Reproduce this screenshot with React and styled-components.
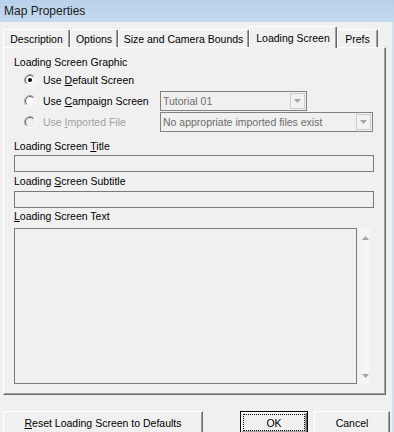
import React from 'react';
import styled, { createGlobalStyle } from 'styled-components';

const GlobalStyle = createGlobalStyle`
    html, body { margin: 0; padding: 0; background: #f0f0f0; }
`;

const Window = styled.div`
    width: 394px;
    height: 432px;
    overflow: hidden;
    display: flex;
    flex-direction: column;
    background: #f0f0f0;
    font-family: "Liberation Sans", Arial, sans-serif;
    font-size: 10.5px;
    color: #000;
`;

const TitleBar = styled.div`
    height: 22px;
    flex-shrink: 0;
    display: flex;
    align-items: center;
    padding-left: 4px;
    font-size: 12px;
    color: #1b1b1b;
    background: linear-gradient(#b8d0ea, #c5d9ee);
`;

const Client = styled.div`
    flex: 1;
    display: flex;
    flex-direction: column;
    padding: 4px 0 0 3px;
    border-right: 2px solid #d2e1f1;
`;

const TabStrip = styled.div`
    display: flex;
    align-items: flex-end;
    height: 21px;
`;

const Tab = styled.div`
    box-sizing: border-box;
    width: ${p => p.$w}px;
    height: ${p => p.$active ? 22 : 18}px;
    margin-bottom: ${p => p.$active ? -1 : 0}px;
    position: relative;
    z-index: ${p => p.$active ? 1 : 0};
    display: flex;
    align-items: center;
    justify-content: center;
    padding-top: ${p => p.$active ? 0 : 1}px;
    white-space: nowrap;
    background: #f0f0f0;
    border-top: 1px solid #fff;
    border-left: 1px solid #fff;
    border-right: 1px solid #696969;
    border-radius: 2px 2px 0 0;
    box-shadow: inset -1px 0 #a0a0a0;
`;

const Panel = styled.div`
    box-sizing: border-box;
    width: 383px;
    height: 348px;
    padding: 8px 11px 0 10px;
    display: flex;
    flex-direction: column;
    border-top: 1px solid #fff;
    border-left: 1px solid #fff;
    border-right: 1px solid #696969;
    border-bottom: 1px solid #696969;
    box-shadow: inset -1px -1px #a0a0a0;
`;

const Label = styled.div`
    line-height: 13px;
    margin-top: ${p => p.$gap || 0}px;
    white-space: nowrap;
`;

const RadioGrid = styled.div`
    display: grid;
    grid-template-columns: 136px auto;
    grid-auto-rows: 21px;
    align-items: center;
    padding-left: 10px;
`;

const RadioItem = styled.div`
    grid-column: 1;
    display: flex;
    align-items: center;
    gap: 7px;
    white-space: nowrap;
    color: ${p => p.$disabled ? '#a0a0a0' : '#000'};
`;

const Combo = styled.div`
    grid-column: 2;
    box-sizing: border-box;
    width: ${p => p.$w}px;
    height: 20px;
    display: flex;
    align-items: center;
    padding-left: 2px;
    border: 1px solid #828282;
    background: #f0f0f0;
    color: #6d6d6d;
`;

const ComboText = styled.span`
    flex: 1;
    white-space: nowrap;
`;

const DropButton = styled.div`
    box-sizing: border-box;
    width: 15px;
    height: 16px;
    margin-right: 1px;
    display: flex;
    align-items: center;
    justify-content: center;
    border: 1px solid #cdcdcd;
    background: #f2f2f2;
`;

const TextBox = styled.div`
    box-sizing: border-box;
    width: 360px;
    height: 17px;
    margin-top: ${p => p.$gap || 0}px;
    border: 1px solid #7a7a7a;
    background: #f0f0f0;
`;

const MemoRow = styled.div`
    display: flex;
    margin-top: 5px;
    height: 156px;
`;

const Memo = styled.div`
    box-sizing: border-box;
    width: 343px;
    border: 1px solid #7a7a7a;
    background: #f0f0f0;
`;

const ScrollBar = styled.div`
    box-sizing: border-box;
    width: 17px;
    display: flex;
    flex-direction: column;
    justify-content: space-between;
    align-items: center;
    padding: 8px 0 6px;
    background: linear-gradient(90deg, #f0f0f0, #f6f6f6 40%, #f6f6f6 60%, #eeeeee);
`;

const ButtonRow = styled.div`
    display: flex;
    margin-top: 16px;
`;

const Button = styled.div`
    box-sizing: border-box;
    width: ${p => p.$w}px;
    height: 23px;
    margin-left: ${p => p.$ml || 0}px;
    flex-shrink: 0;
    display: flex;
    align-items: center;
    justify-content: center;
    white-space: nowrap;
    background: #f0f0f0;
    border-top: 1px solid #fff;
    border-left: 1px solid #fff;
    border-right: 1px solid #696969;
    border-bottom: 1px solid #696969;
    box-shadow: inset -1px -1px #a0a0a0;
`;

const DefaultButton = styled(Button)`
    border: 1px solid #000;
    padding: 2px;
    box-shadow: inset 1px 1px #fff, inset -1px -1px #696969, inset -2px -2px #a0a0a0;
`;

const FocusBox = styled.div`
    align-self: stretch;
    flex: 1;
    display: flex;
    align-items: center;
    justify-content: center;
    border: 1px dotted #000;
`;

function Radio({ checked, disabled }) {
    const fill = disabled ? '#f0f0f0' : '#fff';
    return (
        <svg width="12" height="12" viewBox="0 0 12 12">
            <circle cx="6" cy="6" r="5.5" fill={fill} stroke="#fff" />
            <path d="M2.1 9.9 A5.5 5.5 0 0 1 9.9 2.1" fill="none" stroke="#a0a0a0" />
            <circle cx="6" cy="6" r="4.5" fill="none" stroke="#e3e3e3" />
            <path d="M2.8 9.2 A4.5 4.5 0 0 1 9.2 2.8" fill="none" stroke="#696969" />
            {checked && <circle cx="6" cy="6" r="2" fill="#000" />}
        </svg>
    );
}

function Arrow({ up }) {
    return (
        <svg width="7" height="4" viewBox="0 0 7 4">
            <path d={up ? 'M0 4 L3.5 0 L7 4 Z' : 'M0 0 L7 0 L3.5 4 Z'} fill="#a6a6a6" />
        </svg>
    );
}

function App() {
    return (
        <Window>
            <GlobalStyle />
            <TitleBar>Map Properties</TitleBar>
            <Client>
                <TabStrip>
                    <Tab $w={67}>Description</Tab>
                    <Tab $w={48}>Options</Tab>
                    <Tab $w={131}>Size and Camera Bounds</Tab>
                    <Tab $w={88} $active>Loading Screen</Tab>
                    <Tab $w={41}>Prefs</Tab>
                </TabStrip>
                <Panel>
                    <Label>Loading Screen Graphic</Label>
                    <RadioGrid>
                        <RadioItem>
                            <Radio checked />
                            <span>Use <u>D</u>efault Screen</span>
                        </RadioItem>
                        <RadioItem>
                            <Radio />
                            <span>Use <u>C</u>ampaign Screen</span>
                        </RadioItem>
                        <Combo $w={147}>
                            <ComboText>Tutorial 01</ComboText>
                            <DropButton><Arrow /></DropButton>
                        </Combo>
                        <RadioItem $disabled>
                            <Radio disabled />
                            <span>Use <u>I</u>mported File</span>
                        </RadioItem>
                        <Combo $w={213}>
                            <ComboText>No appropriate imported files exist</ComboText>
                            <DropButton><Arrow /></DropButton>
                        </Combo>
                    </RadioGrid>
                    <Label $gap={8}>Loading Screen <u>T</u>itle</Label>
                    <TextBox $gap={2} />
                    <Label $gap={3}>Loading <u>S</u>creen Subtitle</Label>
                    <TextBox $gap={3} />
                    <Label $gap={2}><u>L</u>oading Screen Text</Label>
                    <MemoRow>
                        <Memo />
                        <ScrollBar>
                            <Arrow up />
                            <Arrow />
                        </ScrollBar>
                    </MemoRow>
                </Panel>
                <ButtonRow>
                    <Button $w={200}><span><u>R</u>eset Loading Screen to Defaults</span></Button>
                    <DefaultButton $w={68} $ml={37}>
                        <FocusBox>OK</FocusBox>
                    </DefaultButton>
                    <Button $w={76} $ml={6}>Cancel</Button>
                </ButtonRow>
            </Client>
        </Window>
    );
}

export default App;
